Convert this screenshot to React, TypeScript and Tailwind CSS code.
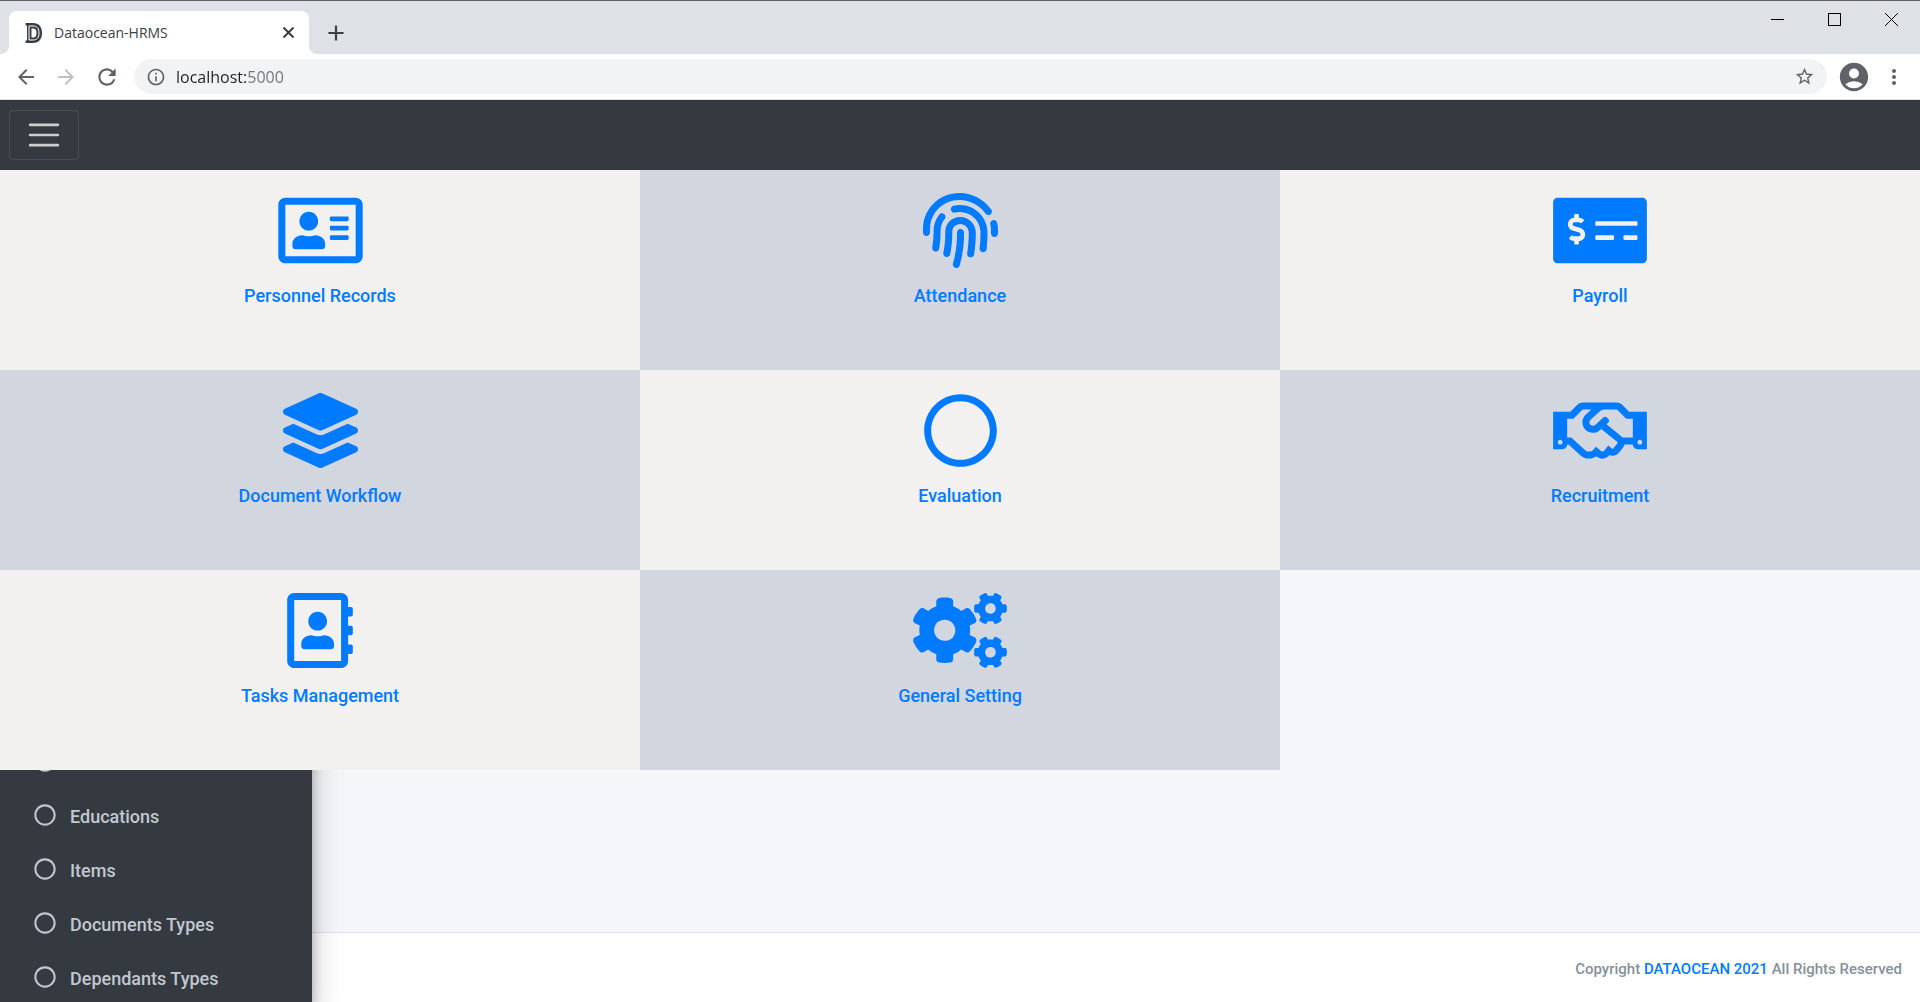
import {
  FaCogs,
  FaFingerprint,
  FaLayerGroup,
  FaMoneyCheckAlt,
  FaRegAddressBook,
  FaRegAddressCard,
  FaRegCircle,
  FaRegHandshake,
} from "react-icons/fa"
import {
  MdAccountCircle,
  MdAdd,
  MdArrowBack,
  MdArrowForward,
  MdInfoOutline,
  MdMoreVert,
  MdRefresh,
  MdStarBorder,
} from "react-icons/md"

const modules = [
  { name: "Personnel Records", icon: FaRegAddressCard, width: "w-[85px]" },
  { name: "Attendance", icon: FaFingerprint, width: "w-[75px]" },
  { name: "Payroll", icon: FaMoneyCheckAlt, width: "w-[94px]" },
  { name: "Document Workflow", icon: FaLayerGroup, width: "w-[75px]" },
  { name: "Evaluation", icon: FaRegCircle, width: "w-[75px]" },
  { name: "Recruitment", icon: FaRegHandshake, width: "w-[94px]" },
  { name: "Tasks Management", icon: FaRegAddressBook, width: "w-[66px]" },
  { name: "General Setting", icon: FaCogs, width: "w-[94px]" },
]

const sidebarItems = ["", "Educations", "Items", "Documents Types", "Dependants Types"]

const TabStrip = () => {
  return (
    <div className="flex h-[54px] justify-between border-t border-[#5f6368] bg-[#dee1e6]">
      <div className="flex items-end">
        <div className="h-2 w-[9px] bg-white">
          <div className="h-2 w-[9px] rounded-br-lg bg-[#dee1e6]" />
        </div>
        <div className="flex h-[43px] w-[300px] items-center rounded-t-lg bg-white pr-2 pl-4">
          <svg className="h-5 w-[17px]" viewBox="0 0 17 20" aria-hidden="true">
            <path d="M0.5 0H8C14 0 17 4 17 10S14 20 8 20H0.5V17.5H2V2.5H0.5Z" fill="#3a3f45" />
            <path
              d="M4 3H8C12 3 14 5.5 14 10S12 17 8 17H4Z"
              fill="#3a3f45"
              stroke="#ffffff"
              strokeWidth="1"
            />
            <path d="M6.5 5.5H8C10.5 5.5 11.5 7 11.5 10S10.5 14.5 8 14.5H6.5Z" fill="#ffffff" />
          </svg>
          <span className="ml-3 flex-1 text-sm text-[#3c4043]">
            Dataocean-HRMS
          </span>
          <button aria-label="Close tab" className="p-[7px]">
            <svg className="h-[11px] w-[11px]" viewBox="0 0 11 11" stroke="#3c4043" strokeWidth="2">
              <path d="M0.5 0.5L10.5 10.5M10.5 0.5L0.5 10.5" />
            </svg>
          </button>
        </div>
        <div className="h-2 w-2 bg-white">
          <div className="h-2 w-2 rounded-bl-lg bg-[#dee1e6]" />
        </div>
        <button aria-label="New tab" className="mb-2 ml-1.5 text-[#3c4043]">
          <MdAdd size={26} />
        </button>
      </div>

      <div className="flex h-9 text-black">
        <button aria-label="Minimize" className="flex w-[57px] items-center justify-center">
          <span className="h-px w-[13px] bg-black" />
        </button>
        <button aria-label="Maximize" className="flex w-[57px] items-center justify-center">
          <span className="h-[13px] w-[13px] border border-black" />
        </button>
        <button aria-label="Close" className="flex w-[57px] items-center justify-center">
          <svg className="h-[13px] w-[13px]" viewBox="0 0 13 13" stroke="#000000">
            <path d="M0 0L13 13M13 0L0 13" />
          </svg>
        </button>
      </div>
    </div>
  )
}

const AddressBar = () => {
  return (
    <div className="flex h-[46px] items-center border-b border-[#dee1e6] bg-white px-3.5 text-[#5f6368]">
      <button aria-label="Back">
        <MdArrowBack size={24} />
      </button>
      <button aria-label="Forward" className="ml-4 text-[#bdc1c6]">
        <MdArrowForward size={24} />
      </button>
      <button aria-label="Reload" className="ml-4">
        <MdRefresh size={26} />
      </button>
      <div className="ml-3.5 flex h-[35px] flex-1 items-center rounded-full bg-[#f1f3f4] px-3">
        <MdInfoOutline size={20} />
        <input
          aria-label="Address"
          className="ml-2.5 flex-1 bg-linear-to-r from-[#202124] from-[70px] to-[#6f7378] to-[70px] bg-clip-text text-base text-transparent outline-none"
          defaultValue="localhost:5000"
        />
        <button aria-label="Bookmark">
          <MdStarBorder size={21} />
        </button>
      </div>
      <button aria-label="Profile" className="ml-2.5">
        <MdAccountCircle size={34} />
      </button>
      <button aria-label="Menu" className="ml-[11px]">
        <MdMoreVert size={24} />
      </button>
    </div>
  )
}

const Navbar = () => {
  return (
    <nav className="relative z-10 flex h-[70px] items-center bg-[#343a40] px-[9px]">
      <button
        aria-label="Toggle navigation"
        className="flex h-[50px] w-[70px] items-center justify-center rounded border border-white/10"
      >
        <svg
          className="h-[38px] w-[38px]"
          viewBox="0 0 30 30"
          stroke="rgba(255,255,255,0.75)"
          strokeWidth="2"
          strokeLinecap="round"
        >
          <path d="M4 7h22M4 15h22M4 23h22" />
        </svg>
      </button>
    </nav>
  )
}

const ModuleGrid = () => {
  return (
    <div className="relative z-10 grid grid-cols-3">
      {modules.map(({ name, icon: Icon, width }, index) => (
        <a
          key={name}
          href="#"
          className={`flex h-[200px] flex-col items-center pt-[23px] text-lg font-medium text-[#007bff] ${
            index % 2 === 0 ? "bg-[#f3f1f0]" : "bg-[#d2d6df]"
          }`}
        >
          <Icon className={`h-[75px] ${width}`} />
          <span className="mt-[14px]">{name}</span>
        </a>
      ))}
    </div>
  )
}

const Sidebar = () => {
  return (
    <aside className="relative -mt-[90px] w-[312px] shrink-0 bg-[#343a40] pt-[54px] shadow-[0_14px_28px_rgba(0,0,0,0.25),0_10px_10px_rgba(0,0,0,0.22)]">
      <ul>
        {sidebarItems.map((item) => (
          <li key={item}>
            <a
              href="#"
              className="flex h-[54px] items-center gap-3.5 pl-[34px] text-lg font-medium text-[#c2c7d0]"
            >
              <FaRegCircle size={22} />
              <span className="pt-1">{item}</span>
            </a>
          </li>
        ))}
      </ul>
    </aside>
  )
}

const App = () => {
  return (
    <div className="flex h-screen flex-col overflow-hidden bg-[#f4f6f9] font-['Open_Sans',sans-serif]">
      <TabStrip />
      <AddressBar />
      <div className="flex min-h-0 flex-1 flex-col font-['Roboto',sans-serif]">
        <Navbar />
        <ModuleGrid />
        <div className="flex min-h-0 flex-1">
          <Sidebar />
          <div className="flex flex-1 flex-col justify-end">
            <footer className="flex h-[70px] items-center justify-end border-t border-[#dee2e6] bg-white px-[18px] pt-1 text-[15px] font-medium text-[#869099]">
              <p>
                Copyright{" "}
                <a href="#" className="text-[#007bff]">
                  DATAOCEAN 2021
                </a>{" "}
                All Rights Reserved
              </p>
            </footer>
          </div>
        </div>
      </div>
    </div>
  )
}

export default App
